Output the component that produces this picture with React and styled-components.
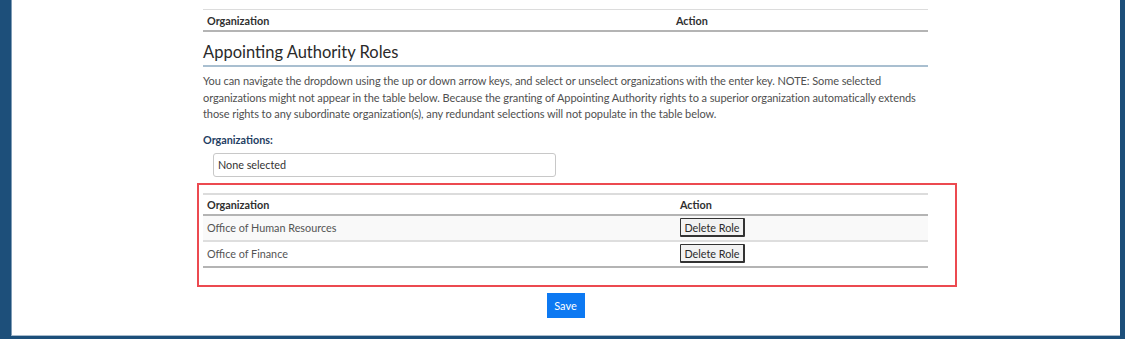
import React from 'react'
import styled, { createGlobalStyle } from 'styled-components'

const GlobalStyle = createGlobalStyle`
  html, body {
    margin: 0;
    padding: 0;
    background: #1d4f7a;
  }
  body {
    font-family: Lato, "Open Sans", sans-serif;
  }
`

const Frame = styled.div`
  width: 1125px;
  height: 339px;
  background: #1d4f7a;
  display: flex;
  padding: 0 5px 3px 11px;
  box-sizing: border-box;
  overflow: hidden;
`

const Panel = styled.div`
  flex: 1;
  background: #ffffff;
  border-left: 1px solid #7f9cb6;
  border-bottom: 1px solid #a9bccd;
  padding-left: 191px;
`

const Content = styled.div`
  width: 725px;
  display: flex;
  flex-direction: column;
`

const Table = styled.div`
  display: flex;
  flex-direction: column;
  border-top: ${p => p.topBorder || 1}px solid #dcdcdc;
  border-bottom: 2px solid #b4b4b4;
  margin-top: ${p => p.top || 0}px;
`

const Row = styled.div`
  display: grid;
  grid-template-columns: ${p => p.first}px auto;
  align-items: center;
  height: ${p => p.h}px;
  background: ${p => (p.striped ? '#f9f9f9' : '#ffffff')};
  border-bottom: ${p => (p.head ? '2px solid #b4b4b4' : p.divider ? '2px solid #dedede' : 'none')};
`

const Cell = styled.div`
  padding: 0 4px;
  font-size: 10.8px;
  color: ${p => (p.head ? '#2f2f2f' : '#545454')};
  font-weight: ${p => (p.head ? 700 : 400)};
`

const Heading = styled.h2`
  margin: 9px 0 0;
  font-size: 16.5px;
  font-weight: 400;
  line-height: 22px;
  color: #2a2a2a;
  padding-bottom: 2px;
  border-bottom: 2px solid #a9bfd0;
`

const Note = styled.p`
  margin: 6px 0 0;
  font-size: 11px;
  letter-spacing: -0.08px;
  line-height: 16.5px;
  color: #4f4f4f;
`

const Label = styled.div`
  margin-top: 9px;
  font-size: 10.8px;
  line-height: 16px;
  font-weight: 700;
  color: #1f3e63;
`

const Select = styled.div`
  margin: 5px 0 0 10px;
  width: 343px;
  height: 24px;
  box-sizing: border-box;
  border: 1px solid #c8c8c8;
  border-radius: 3px;
  padding: 0 4px;
  display: flex;
  align-items: center;
  font-size: 10.8px;
  color: #333;
`

const Highlight = styled.div`
  margin: 6px -29px 0 -6px;
  border: 2px solid #ec4a50;
  padding: 8px 27px 17px 4px;
`

const DeleteButton = styled.button`
  width: 65px;
  height: 19px;
  padding: 0;
  font-family: inherit;
  font-size: 10.8px;
  color: #2a2a2a;
  background: #f2f2f2;
  border: 1px solid #333;
  border-right-width: 2px;
  border-bottom-width: 2px;
  border-radius: 1px;
`

const SaveButton = styled.button`
  align-self: center;
  margin-top: 6px;
  width: 38px;
  height: 25px;
  padding: 0;
  border: none;
  background: #0d79f2;
  color: #fff;
  font-family: inherit;
  font-size: 11px;
`

const roles = ['Office of Human Resources', 'Office of Finance']

const App = () => (
  <>
    <GlobalStyle />
    <Frame>
      <Panel>
        <Content>
          <Table top={9}>
            <Row first={469} h={20}>
              <Cell head>Organization</Cell>
              <Cell head>Action</Cell>
            </Row>
          </Table>

          <Heading>Appointing Authority Roles</Heading>
          <Note>
            You can navigate the dropdown using the up or down arrow keys, and select or unselect organizations with the enter key. NOTE: Some selected organizations might not appear in the table below. Because the granting of Appointing Authority rights to a superior organization automatically extends those rights to any subordinate organization(s), any redundant selections will not populate in the table below.
          </Note>

          <Label>Organizations:</Label>
          <Select>None selected</Select>

          <Highlight>
            <Table topBorder={2}>
              <Row first={473} h={19} head>
                <Cell head>Organization</Cell>
                <Cell head>Action</Cell>
              </Row>
              {roles.map((role, index) => (
                <Row
                  key={role}
                  first={473}
                  h={24}
                  striped={index % 2 === 0}
                  divider={index < roles.length - 1}
                >
                  <Cell>{role}</Cell>
                  <Cell>
                    <DeleteButton>Delete Role</DeleteButton>
                  </Cell>
                </Row>
              ))}
            </Table>
          </Highlight>

          <SaveButton>Save</SaveButton>
        </Content>
      </Panel>
    </Frame>
  </>
)

export default App
